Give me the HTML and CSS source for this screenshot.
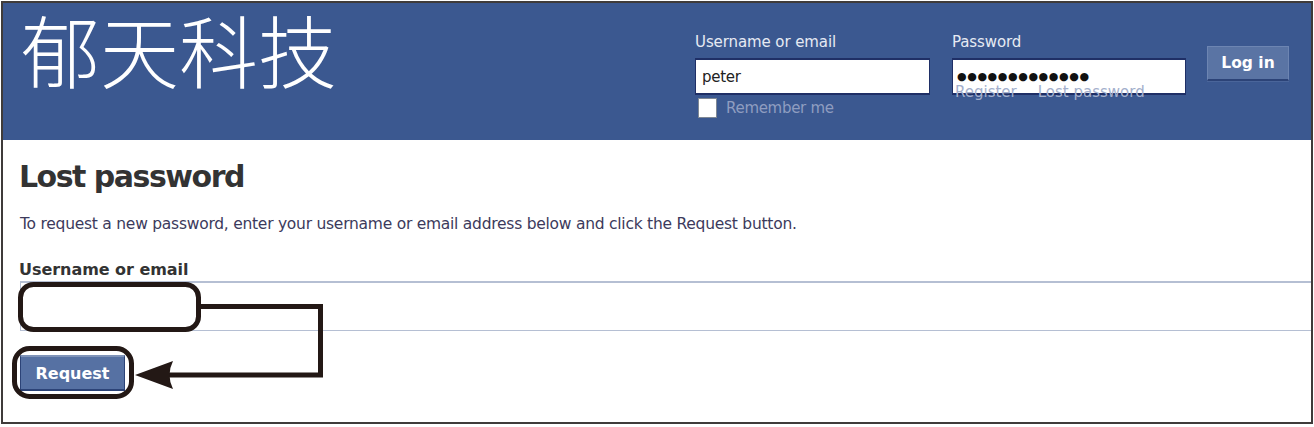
FILE: index.html
```html
<!DOCTYPE html>
<html lang="en">
<head>
<meta charset="utf-8">
<title>Lost password</title>
<link rel="stylesheet" href="styles.css">
</head>
<body>
<div class="frame">
  <header class="top">
    <div class="logo" lang="zh">郁天科技</div>
    <form class="login">
      <div class="field">
        <label class="top-label">Username or email</label>
        <div class="fake-input">peter</div>
        <div class="remember"><span class="check"></span><span>Remember me</span></div>
      </div>
      <div class="field pw">
        <label class="top-label">Password</label>
        <div class="fake-input dots">●●●●●●●●●●●●●</div>
        <div class="links"><span>Register</span><span>Lost password</span></div>
      </div>
      <div class="login-btn">Log in</div>
    </form>
  </header>
  <main class="content">
    <h1>Lost password</h1>
    <p class="intro">To request a new password, enter your username or email address below and click the Request button.</p>
    <div class="form-label">Username or email</div>
    <div class="wide-input"></div>
    <div class="request">Request</div>
  </main>
  <svg class="notes" width="1314" height="427" viewBox="0 0 1314 427" fill="none" aria-hidden="true">
    <rect x="20.5" y="284.5" width="178" height="45" rx="13" stroke="#231815" stroke-width="5"/>
    <rect x="14.5" y="348.5" width="117" height="48" rx="15" stroke="#231815" stroke-width="5"/>
    <path d="M200 306.5H320.5V375H166" stroke="#231815" stroke-width="5"/>
    <path d="M135 375L173 361Q166 375 173 389Z" fill="#231815"/>
  </svg>
</div>
</body>
</html>
```
FILE: styles.css
```css
* { box-sizing: border-box; }
html, body { margin: 0; padding: 0; background: #fff; }
body { width: 1314px; height: 427px; overflow: hidden; font-family: "DejaVu Sans", Verdana, sans-serif; color: #333; }
.frame { position: relative; width: 1312px; height: 423px; margin: 1px 0 0 1px; border: 2px solid #3f3b3a; background: #fff; }
.top { display: flex; height: 137px; background: #3b5890; color: #fff; }
.logo { width: 692px; padding: 8px 0 0 18px; font-family: "Liberation Serif", "Noto Sans CJK SC", "Noto Sans CJK JP", serif; font-size: 79px; font-weight: 300; line-height: 91px; color: #fff; white-space: nowrap; }
.login { display: flex; align-items: flex-start; padding-top: 29px; }
.field { display: flex; flex-direction: column; width: 235px; margin-right: 22px; }
.field.pw { width: 234px; margin-right: 21px; }
.top-label { font-size: 15px; line-height: 20px; color: #e6eaf3; letter-spacing: -0.1px; white-space: nowrap; }
.fake-input { height: 37px; margin-top: 6px; padding: 6px 0 0 6px; background: #fff; border: 1px solid #1f2f66; border-width: 2px 1px; color: #222; font-size: 15px; line-height: 22px; letter-spacing: -0.3px; }
.fake-input.dots { font-size: 11px; font-weight: 700; letter-spacing: 0.6px; padding: 6px 0 0 4px; line-height: 22px; color: #111; white-space: nowrap; }
.remember { display: flex; align-items: center; gap: 9px; margin: 3px 0 0 3px; font-size: 15px; letter-spacing: -0.3px; color: #8f9dc0; }
.check { width: 19px; height: 20px; background: #fff; border: 1px solid #7f8894; }
.links { display: flex; gap: 21px; margin: -12px 0 0 3px; font-size: 15px; line-height: 18px; color: #a3afcc; white-space: nowrap; }
.login-btn { width: 82px; height: 35px; margin-top: 14px; background: #5a74a4; border: 1px solid #6d85b2; border-bottom: 2px solid #2c4377; box-shadow: 0 1px 0 #4a659a; color: #fff; font-size: 15.5px; font-weight: 700; line-height: 33px; text-align: center; }
.content { padding: 0 0 0 17px; }
h1 { margin: 19px 0 0 -1px; font-size: 30px; line-height: 36px; font-weight: 700; color: #333; letter-spacing: -1.5px; white-space: nowrap; }
.intro { margin: 19px 0 0; font-size: 15.5px; line-height: 20px; color: #3c3a5c; letter-spacing: -0.25px; white-space: nowrap; }
.form-label { margin: 27px 0 0 -1px; font-size: 16px; line-height: 18px; font-weight: 700; color: #333; letter-spacing: -0.05px; white-space: nowrap; }
.wide-input { height: 50px; margin-top: 2px; border: 1px solid #b5bfd3; border-top-width: 2px; border-right: 0; }
.request { width: 105px; height: 36px; margin-top: 24px; background: #5671a3; border: 1px solid #2c4377; border-top: 2px solid #7f93b8; border-bottom-width: 2px; color: #fff; font-size: 16px; font-weight: 700; line-height: 33px; text-align: center; }
.notes { position: absolute; left: -3px; top: -3px; pointer-events: none; }
```
